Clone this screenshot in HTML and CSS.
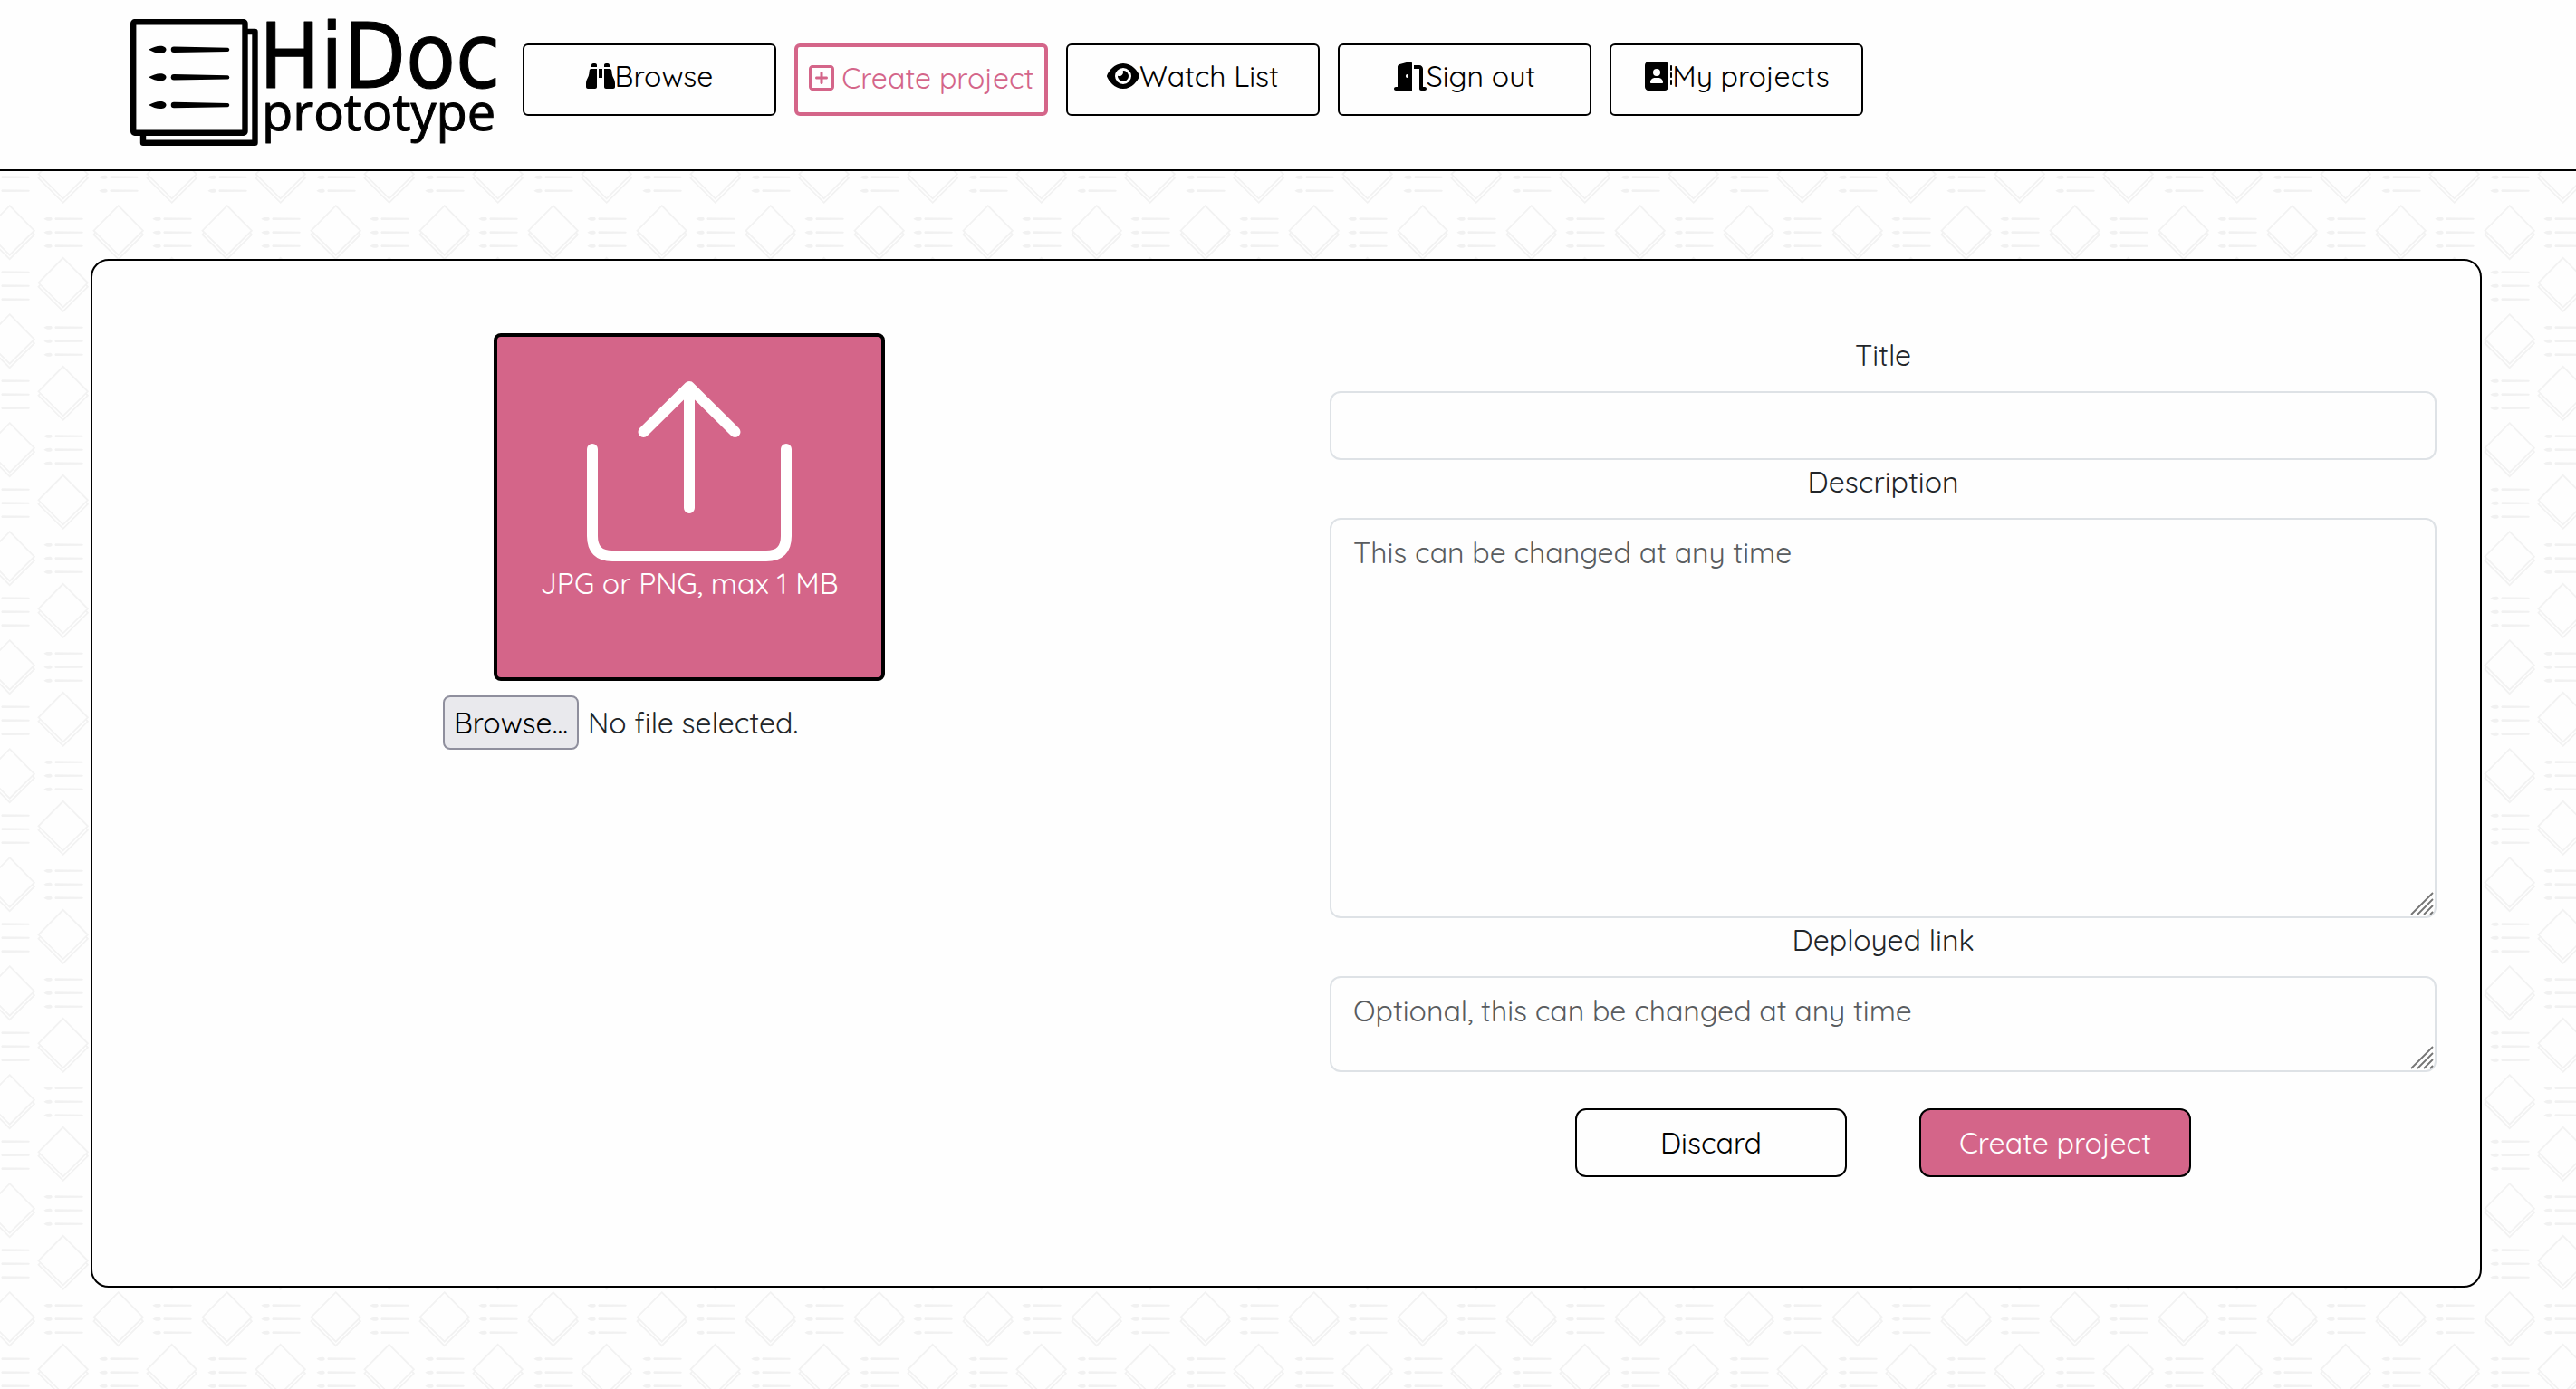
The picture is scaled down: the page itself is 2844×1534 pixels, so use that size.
FILE: index.html
```html
<!DOCTYPE html>
<html lang="en">
<head>
<meta charset="utf-8">
<meta name="viewport" content="width=device-width, initial-scale=1">
<title>HiDoc prototype - Create project</title>
<link rel="stylesheet" href="styles.css">
</head>
<body>
<header class="site-header">
  <a class="logo" href="#" aria-label="HiDoc prototype">
    <svg class="logo-art" viewBox="0 0 413 142">
      <path class="logo-sheet" d="M129 15H137.500V137.800H14V130"/>
      <rect class="logo-sheet" x="3.200" y="4.200" width="123.300" height="122.600" rx="1.500"/>
      <g id="logo-line">
        <path d="M20 34.700C24 32.500 29 30.700 33 30.700C37 30.700 39.500 32.500 39.500 34.700C39.500 37 37 38.800 33 38.800C29 38.800 24 37 20 34.700Z"/>
        <path d="M48 31.500L107.500 32.700A2.200 2.200 0 0 1 107.500 37L48 38A3.200 3.200 0 0 1 48 31.500Z"/>
      </g>
      <use href="#logo-line" y="30.600"/>
      <use href="#logo-line" y="61.200"/>
      <text class="logo-name" x="142" y="77">HiDoc</text>
      <text class="logo-sub" x="145" y="124">prototype</text>
    </svg>
  </a>
  <nav class="nav">
    <a class="nav-link" href="#"><svg class="icon" viewBox="0 0 512 512"><path d="M128 32h32c17.700 0 32 14.300 32 32V96H96V64c0-17.700 14.300-32 32-32zm64 96V448c0 17.700-14.300 32-32 32H32c-17.700 0-32-14.300-32-32V388.900c0-34.600 9.400-68.600 27.200-98.300C40.900 267.800 49.700 242.400 53 216L60.500 156c2-16 15.600-28 31.800-28H192zm227.800 0c16.100 0 29.800 12 31.800 28L459 216c3.300 26.400 12.100 51.800 25.800 74.600c17.800 29.700 27.200 63.700 27.200 98.300V448c0 17.700-14.300 32-32 32H352c-17.700 0-32-14.300-32-32V128h99.800zM320 64c0-17.700 14.300-32 32-32h32c17.700 0 32 14.300 32 32V96H320V64zm-32 64V288H224V128h64z"/></svg>Browse</a>
    <a class="nav-link nav-link-active" href="#" aria-current="page"><svg class="icon icon-narrow" viewBox="0 0 448 512"><path d="M64 80c-8.800 0-16 7.200-16 16V416c0 8.800 7.200 16 16 16H384c8.800 0 16-7.200 16-16V96c0-8.800-7.200-16-16-16H64zM0 96C0 60.700 28.700 32 64 32H384c35.300 0 64 28.700 64 64V416c0 35.300-28.700 64-64 64H64c-35.300 0-64-28.700-64-64V96zM200 344V280H136c-13.300 0-24-10.700-24-24s10.700-24 24-24h64V168c0-13.300 10.700-24 24-24s24 10.700 24 24v64h64c13.300 0 24 10.700 24 24s-10.700 24-24 24H248v64c0 13.300-10.700 24-24 24s-24-10.700-24-24z"/></svg> Create project</a>
    <a class="nav-link" href="#"><svg class="icon icon-wide" viewBox="0 0 576 512"><path d="M288 32c-80.800 0-145.500 36.800-192.600 80.600C48.600 156 17.300 208 2.500 243.700c-3.300 7.900-3.300 16.700 0 24.600C17.300 304 48.600 356 95.400 399.400C142.500 443.200 207.200 480 288 480s145.500-36.800 192.600-80.600c46.800-43.500 78.100-95.400 93-131.100c3.300-7.900 3.300-16.700 0-24.600c-14.900-35.700-46.200-87.700-93-131.100C433.500 68.800 368.800 32 288 32zM144 256a144 144 0 1 1 288 0 144 144 0 1 1 -288 0zm144-64c0 35.300-28.700 64-64 64c-7.100 0-13.900-1.200-20.300-3.300c-5.500-1.800-11.900 1.600-11.700 7.400c.3 6.900 1.300 13.800 3.200 20.700c13.700 51.200 66.400 81.600 117.600 67.900s81.600-66.400 67.900-117.600c-11.100-41.500-47.800-69.400-88.600-71.100c-5.800-.2-9.200 6.100-7.400 11.700c2.100 6.400 3.300 13.200 3.300 20.300z"/></svg>Watch List</a>
    <a class="nav-link" href="#"><svg class="icon icon-wide" viewBox="0 0 576 512"><path d="M320 32c0-9.900-4.500-19.200-12.300-25.200S289.800-1.400 280.200 1l-179.900 45C79 51.300 64 70.500 64 92.500V448H32c-17.700 0-32 14.300-32 32s14.300 32 32 32H96 288h32V480 32zM256 256c0 17.700-10.700 32-24 32s-24-14.300-24-32s10.700-32 24-32s24 14.300 24 32zm96-128h96V480c0 17.700 14.300 32 32 32h64c17.700 0 32-14.300 32-32s-14.300-32-32-32H512V128c0-35.300-28.700-64-64-64H352v64z"/></svg>Sign out</a>
    <a class="nav-link" href="#"><svg class="icon" viewBox="0 0 512 512"><path d="M96 0C60.700 0 32 28.700 32 64V448c0 35.300 28.700 64 64 64H384c35.300 0 64-28.700 64-64V64c0-35.300-28.700-64-64-64H96zM208 288h64c44.200 0 80 35.800 80 80c0 8.800-7.200 16-16 16H144c-8.800 0-16-7.200-16-16c0-44.200 35.800-80 80-80zm-32-96a64 64 0 1 1 128 0 64 64 0 1 1 -128 0zM512 80c0-8.800-7.200-16-16-16s-16 7.200-16 16v64c0 8.800 7.200 16 16 16s16-7.200 16-16V80zM496 192c-8.800 0-16 7.200-16 16v64c0 8.800 7.200 16 16 16s16-7.200 16-16V208c0-8.800-7.200-16-16-16zm16 144c0-8.800-7.200-16-16-16s-16 7.200-16 16v64c0 8.800 7.200 16 16 16s16-7.200 16-16V336z"/></svg>My projects</a>
  </nav>
</header>
<main class="page">
  <form class="card">
    <section class="upload">
      <label class="upload-box" for="image">
        <svg class="upload-icon" viewBox="0 0 226 200"><path d="M6 76V172Q6 194 28 194H198Q220 194 220 172V76M113 141V8M62.500 57L113 7L163.500 57"/></svg>
        <span>JPG or PNG, max 1 MB</span>
      </label>
      <div class="file-row">
        <span class="file-button">Browse...</span>
        <span>No file selected.</span>
        <input class="file-input" type="file" id="image" accept="image/png, image/jpeg">
      </div>
    </section>
    <section class="fields">
      <label class="label" for="title">Title</label>
      <input class="control" type="text" id="title">
      <label class="label" for="description">Description</label>
      <div class="resizable">
        <textarea class="control control-tall" id="description" placeholder="This can be changed at any time"></textarea>
        <svg class="grip" viewBox="0 0 28 28"><path d="M2 26L26 2M9 26L26 9M16 26L26 16M23 26L26 23"/></svg>
      </div>
      <label class="label" for="link">Deployed link</label>
      <div class="resizable">
        <textarea class="control control-short" id="link" placeholder="Optional, this can be changed at any time"></textarea>
        <svg class="grip" viewBox="0 0 28 28"><path d="M2 26L26 2M9 26L26 9M16 26L26 16M23 26L26 23"/></svg>
      </div>
      <div class="actions">
        <button class="button" type="button">Discard</button>
        <button class="button button-primary" type="submit">Create project</button>
      </div>
    </section>
  </form>
</main>
</body>
</html>
```
FILE: styles.css
```css
:root {
  --pink: #d46589;
  --paper: #fefefe;
  --ink: #212529;
}

* {
  box-sizing: border-box;
}

body {
  margin: 0;
  min-height: 100vh;
  color: var(--ink);
  font-family: Quicksand, Lato, sans-serif;
  font-size: 32px;
  font-weight: 400;
  line-height: 48px;
  background-color: var(--paper);
  background-image: url("data:image/svg+xml,%3Csvg xmlns='http://www.w3.org/2000/svg' xmlns:xlink='http://www.w3.org/1999/xlink' width='120' height='120'%3E%3Cdefs%3E%3Cg id='d' fill='none' stroke='%23f2f2f2' stroke-width='1.800'%3E%3Cpath d='M0 -27.500L27.200 0L0 27L-27.200 0Z'/%3E%3Cpath d='M-25.500 2.500L-27.200 4.500L0 31.500L27.200 4.500L25.500 2.500'/%3E%3C/g%3E%3Cg id='l' fill='%23f1f1f1'%3E%3Cpath d='M0 0C3 -2.600 9.400 -2.800 9.400 0C9.400 2.800 3 2.600 0 0Z'/%3E%3Cpath d='M13 -1.400L42.500 -1Q44.500 0 42.500 1L13 1.400Q11 0 13 -1.400Z'/%3E%3C/g%3E%3Cg id='b'%3E%3Cuse xlink:href='%23l'/%3E%3Cuse xlink:href='%23l' y='15'/%3E%3Cuse xlink:href='%23l' y='30'/%3E%3C/g%3E%3C/defs%3E%3Cuse xlink:href='%23d' x='69.700' y='72.300'/%3E%3Cuse xlink:href='%23d' x='10.700' y='14.700'/%3E%3Cuse xlink:href='%23d' x='130.700' y='14.700'/%3E%3Cuse xlink:href='%23d' x='10.700' y='134.700'/%3E%3Cuse xlink:href='%23d' x='130.700' y='134.700'/%3E%3Cuse xlink:href='%23b' x='48.300' y='1.700'/%3E%3Cuse xlink:href='%23b' x='109.300' y='60.700'/%3E%3Cuse xlink:href='%23b' x='-10.700' y='60.700'/%3E%3C/svg%3E");
}

.site-header {
  display: flex;
  align-items: flex-start;
  gap: 20px;
  padding: 20px 144px 25px;
  background: var(--paper);
  border-bottom: 2px solid #000;
}

.logo {
  flex: none;
  width: 413px;
  color: #000;
}

.logo-art {
  display: block;
  width: 100%;
  overflow: visible;
}

.logo-sheet {
  fill: none;
  stroke: #000;
  stroke-width: 6.400;
  stroke-linejoin: round;
}

.logo-name,
.logo-sub {
  font-weight: 400;
  stroke: #000;
  stroke-width: 1;
  stroke-linejoin: round;
}

.logo-name {
  font-family: "M PLUS Rounded 1c", "DejaVu Sans Condensed", sans-serif;
  font-size: 100px;
}

.logo-sub {
  font-family: "M PLUS Rounded 1c", "Open Sans", sans-serif;
  font-size: 56px;
}

.nav {
  display: flex;
  flex-wrap: wrap;
  gap: 20px;
  padding-top: 28px;
}

.nav-link {
  width: 280px;
  min-height: 80px;
  padding-top: 10px;
  border: 2px solid #000;
  border-radius: 6px;
  color: #000;
  text-align: center;
  text-decoration: none;
}

.nav-link-active {
  border: 4px solid var(--pink);
  color: var(--pink);
}

.icon {
  width: 32px;
  height: 32px;
  fill: currentColor;
  vertical-align: -4px;
}

.icon-narrow {
  width: 28px;
}

.icon-wide {
  width: 36px;
}

.page {
  padding: 97px 104px 112px 100px;
}

.card {
  display: grid;
  grid-template-columns: 1fr 1fr;
  padding: 80px 0 120px;
  background: var(--paper);
  border: 2px solid #000;
  border-radius: 20px;
}

.upload {
  display: flex;
  flex-direction: column;
  align-items: center;
  gap: 16px;
  padding: 0 48px;
}

.upload-box {
  display: flex;
  flex-direction: column;
  align-items: center;
  width: 432px;
  height: 384px;
  padding-top: 48px;
  background: var(--pink);
  border: 4px solid #000;
  border-radius: 8px;
  color: #fff;
  cursor: pointer;
}

.upload-icon {
  width: 226px;
  height: 200px;
  fill: none;
  stroke: #fff;
  stroke-width: 12;
  stroke-linecap: round;
  stroke-linejoin: round;
}

.file-row {
  position: relative;
  display: flex;
  align-items: center;
  gap: 10px;
  width: 544px;
}

.file-button {
  min-width: 150px;
  padding: 4px 8px;
  background: #e9e9ed;
  border: 2px solid #8f8f9d;
  border-radius: 8px;
  color: #000;
  text-align: center;
}

.file-input {
  position: absolute;
  inset: 0;
  width: 100%;
  opacity: 0;
  cursor: pointer;
}

.fields {
  display: flex;
  flex-direction: column;
  padding: 0 48px;
}

.label {
  margin-bottom: 16px;
  text-align: center;
}

.control {
  display: block;
  width: 100%;
  margin: 0;
  padding: 12px 24px;
  background: var(--paper);
  border: 2px solid #dee2e6;
  border-radius: 12px;
  color: var(--ink);
  font: inherit;
}

.control::placeholder {
  color: #595c5f;
}

.control-tall {
  height: 442px;
}

.control-short {
  height: 106px;
}

.control::-webkit-resizer {
  background: transparent;
}

.resizable {
  position: relative;
}

/* Resize grip over the corner of a text area */
.grip {
  position: absolute;
  right: 2px;
  bottom: 2px;
  width: 28px;
  height: 28px;
  fill: none;
  stroke: #757575;
  stroke-width: 1.800;
  pointer-events: none;
}

.actions {
  display: flex;
  flex-wrap: wrap;
  justify-content: center;
  gap: 80px;
  margin-top: 40px;
}

.button {
  width: 300px;
  padding: 12px;
  background: var(--paper);
  border: 2px solid #000;
  border-radius: 12px;
  color: #000;
  font: inherit;
}

.button-primary {
  background: var(--pink);
  color: #fff;
}
```
